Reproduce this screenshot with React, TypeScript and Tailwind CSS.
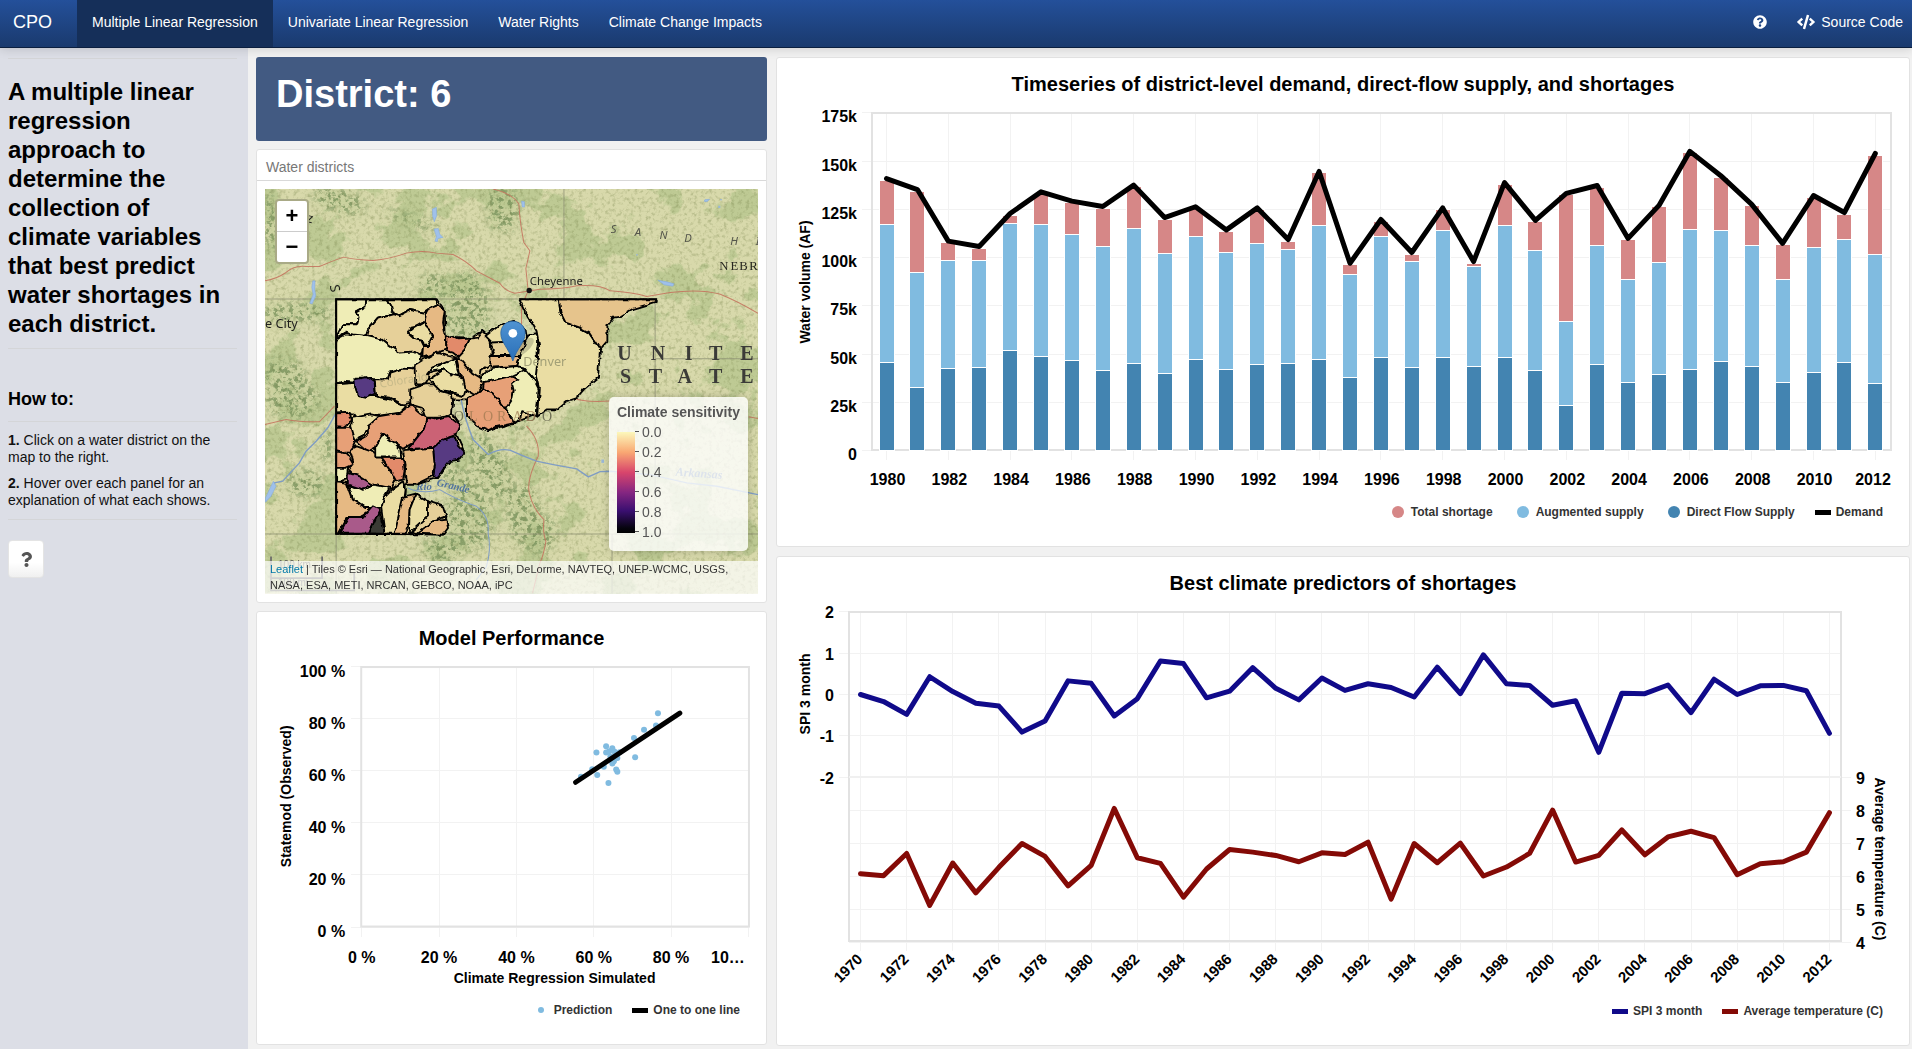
import React from "react";
import { FaCode, FaQuestion, FaQuestionCircle } from "react-icons/fa";

/* ---------- data ---------- */

// [year, direct flow, + augmented, + shortage] as stacked tops, thousand AF
const supply: [number, number, number, number][] = [
  [1980, 45.6, 117.2, 140.1],
  [1981, 32.7, 92.3, 134.4],
  [1982, 42.5, 98.5, 107.7],
  [1983, 43.0, 98.5, 104.9],
  [1984, 51.8, 117.7, 122.0],
  [1985, 48.7, 117.2, 133.2],
  [1986, 46.7, 112.0, 128.4],
  [1987, 41.5, 105.8, 125.6],
  [1988, 45.1, 115.1, 136.7],
  [1989, 39.9, 102.1, 119.9],
  [1990, 47.2, 110.9, 125.5],
  [1991, 42.0, 102.6, 113.5],
  [1992, 44.6, 107.3, 124.9],
  [1993, 45.1, 104.2, 108.5],
  [1994, 47.2, 116.6, 143.8],
  [1995, 37.8, 91.3, 96.2],
  [1996, 48.2, 110.9, 118.9],
  [1997, 43.1, 98.0, 101.8],
  [1998, 48.2, 114.0, 124.9],
  [1999, 43.6, 95.5, 97.1],
  [2000, 48.2, 116.7, 138.0],
  [2001, 41.5, 103.6, 118.4],
  [2002, 23.3, 66.9, 132.4],
  [2003, 44.5, 106.4, 136.5],
  [2004, 35.3, 88.7, 109.1],
  [2005, 39.5, 97.4, 126.2],
  [2006, 42.0, 114.5, 154.2],
  [2007, 46.2, 114.0, 141.6],
  [2008, 43.6, 106.4, 126.7],
  [2009, 35.3, 88.7, 106.5],
  [2010, 40.4, 105.3, 131.3],
  [2011, 45.6, 109.4, 122.5],
  [2012, 34.7, 101.6, 153.1],
];

const spi = [
  0, -0.17, -0.48, 0.43, 0.07, -0.21, -0.28, -0.91, -0.64, 0.33, 0.27, -0.52, -0.1, 0.81, 0.75, -0.08, 0.08, 0.65,
  0.15, -0.13, 0.4, 0.1, 0.26, 0.17, -0.06, 0.66, 0.02, 0.96, 0.26, 0.22, -0.26, -0.15, -1.4, 0.03, 0.02, 0.23,
  -0.44, 0.37, 0, 0.21, 0.22, 0.09, -0.94,
];

const temperature = [
  6.08, 6.02, 6.69, 5.12, 6.4, 5.5, 6.27, 6.99, 6.6, 5.71, 6.33, 8.05, 6.56, 6.39, 5.37, 6.22, 6.81, 6.73, 6.63,
  6.44, 6.71, 6.66, 7.03, 5.31, 6.99, 6.41, 7.0, 6.01, 6.28, 6.69, 8.0, 6.43, 6.63, 7.4, 6.65, 7.19, 7.36, 7.17,
  6.05, 6.38, 6.44, 6.73, 7.92,
];

// [simulated %, observed %]
const predictions: [number, number][] = [
  [56.7, 57.7], [59.6, 60.6], [60.7, 67.0], [60.9, 58.4], [63.2, 69.4], [63.2, 67.0], [64.8, 68.6], [65.4, 67.3],
  [64.3, 65.5], [66.1, 64.9], [64.8, 62.8], [62.6, 61.5], [65.8, 60.5], [66.1, 59.6], [63.8, 55.3], [70.7, 65.2],
  [70.4, 72.6], [73.0, 75.7], [76.1, 77.4], [76.6, 82.1], [66.7, 67.1], [65.2, 63.6], [64.0, 67.5],
];

const evenYears = (from: number, to: number) =>
  Array.from({ length: (to - from) / 2 + 1 }, (_, i) => from + i * 2);

/* ---------- shared pieces ---------- */

const tickText = "fill-black text-[16px] font-bold";
const axisText = "fill-black text-[14px] font-bold";

function Card({ children }: { children: React.ReactNode }) {
  return <section className="rounded-[3px] border border-[#e2e2e2] bg-white">{children}</section>;
}

type LegendItem = { label: string; color: string; shape: "dot" | "smallDot" | "line" };

function ChartCard({ title, legend, children }: { title: string; legend: LegendItem[]; children: React.ReactNode }) {
  return (
    <Card>
      <h2 className="pt-3.5 text-center text-[20px] leading-6 font-bold text-black">{title}</h2>
      {children}
      <ul className="mb-[22px] flex h-6 items-center justify-end gap-5 pr-[26px] text-[12px] font-bold text-[#333]">
        {legend.map((item) => (
          <li key={item.label} className="flex items-center">
            {item.shape === "line" ? (
              <span className="mr-[5px] h-[5px] w-4" style={{ background: item.color }} />
            ) : (
              <span className="mr-[7px] ml-1 flex size-3 items-center justify-center">
                <span
                  className={item.shape === "dot" ? "size-3 rounded-full" : "size-1.5 rounded-full"}
                  style={{ background: item.color }}
                />
              </span>
            )}
            {item.label}
          </li>
        ))}
      </ul>
    </Card>
  );
}

/* ---------- charts ---------- */

function TimeseriesChart() {
  const x = (year: number) => 109.5 + (year - 1980) * 30.9;
  const y = (k: number) => 354.5 - k * 1.93;
  return (
    <svg viewBox="0 0 1132 404" className="block w-full" role="img" aria-label="Demand, supply and shortages by year">
      <g stroke="#f2f2f2" strokeWidth="1" shapeRendering="crispEdges">
        {[0, 25, 50, 75, 100, 125, 150, 175].map((k) => (
          <line key={k} x1="85" x2="1114" y1={y(k)} y2={y(k)} />
        ))}
        {evenYears(1980, 2012).map((t) => (
          <line key={t} x1={x(t)} x2={x(t)} y1="17" y2="364" />
        ))}
      </g>
      <rect x="95" y="17" width="1019" height="337" fill="none" stroke="#e2e2e2" strokeWidth="2" />
      {supply.map(([year, direct, augmented, total]) => (
        <g key={year} stroke="#fff" strokeWidth="1" shapeRendering="crispEdges">
          <rect x={x(year) - 7.5} width="15" y={y(total)} height={y(augmented) - y(total)} fill="#d68787" />
          <rect x={x(year) - 7.5} width="15" y={y(augmented)} height={y(direct) - y(augmented)} fill="#80bbe0" />
          <rect x={x(year) - 7.5} width="15" y={y(direct)} height={y(0) - y(direct)} fill="#4384b1" />
        </g>
      ))}
      <polyline
        points={supply.map(([year, , , total]) => `${x(year)},${y(total + 0.8)}`).join(" ")}
        fill="none"
        stroke="#000"
        strokeWidth="5"
        strokeLinejoin="round"
        strokeLinecap="round"
      />
      {[0, 25, 50, 75, 100, 125, 150, 175].map((k) => (
        <text key={k} x="80" y={y(k) + 9.5} textAnchor="end" className={tickText}>
          {k === 0 ? "0" : `${k}k`}
        </text>
      ))}
      {evenYears(1980, 2012).map((t) => (
        <text key={t} x={t === 2012 ? 1096 : x(t) + 1} y="389" textAnchor="middle" className={tickText}>
          {t}
        </text>
      ))}
      <text transform="translate(33 186) rotate(-90)" textAnchor="middle" className={axisText}>
        Water volume (AF)
      </text>
    </svg>
  );
}

function PredictorsChart() {
  const x = (i: number) => 83.5 + i * 23.07;
  const ySpi = (v: number) => 99.5 - v * 41.3;
  const yTemp = (v: number) => 347.5 - (v - 4) * 33.1;
  return (
    <svg viewBox="0 0 1132 404" className="block w-full" role="img" aria-label="SPI and average temperature by year">
      <g stroke="#f2f2f2" strokeWidth="1" shapeRendering="crispEdges">
        {[2, 1, 0, -1, -2].map((v) => (
          <line key={v} x1="62" x2="1064" y1={ySpi(v)} y2={ySpi(v)} />
        ))}
        {[4, 5, 6, 7, 8, 9].map((v) => (
          <line key={v} x1="72" x2="1074" y1={yTemp(v)} y2={yTemp(v)} />
        ))}
        {evenYears(1970, 2012).map((t) => (
          <line key={t} x1={x(t - 1970)} x2={x(t - 1970)} y1="17" y2="356" />
        ))}
      </g>
      <rect x="72" y="17" width="992" height="329" fill="none" stroke="#e2e2e2" strokeWidth="2" />
      <line x1="72" x2="1064" y1="182" y2="182" stroke="#f0f0f0" strokeWidth="2" />
      <polyline
        points={spi.map((v, i) => `${x(i)},${ySpi(v)}`).join(" ")}
        fill="none"
        stroke="#100a8a"
        strokeWidth="5"
        strokeLinejoin="round"
        strokeLinecap="round"
      />
      <polyline
        points={temperature.map((v, i) => `${x(i)},${yTemp(v)}`).join(" ")}
        fill="none"
        stroke="#840a06"
        strokeWidth="5"
        strokeLinejoin="round"
        strokeLinecap="round"
      />
      {[2, 1, 0, -1, -2].map((v) => (
        <text key={v} x="57" y={ySpi(v) + 6.5} textAnchor="end" className={tickText}>
          {v}
        </text>
      ))}
      {[4, 5, 6, 7, 8, 9].map((v) => (
        <text key={v} x="1079" y={yTemp(v) + 6.5} className={tickText}>
          {v}
        </text>
      ))}
      {evenYears(1970, 2012).map((t) => (
        <text
          key={t}
          transform={`translate(${x(t - 1970) + 3} 365) rotate(-45)`}
          textAnchor="end"
          className="fill-black text-[15px] font-bold"
        >
          {t}
        </text>
      ))}
      <text transform="translate(33 99) rotate(-90)" textAnchor="middle" className={axisText}>
        SPI 3 month
      </text>
      <text transform="translate(1098 264) rotate(90)" textAnchor="middle" className={axisText}>
        Average temperature (C)
      </text>
    </svg>
  );
}

function PerformanceChart() {
  const x = (p: number) => 104.5 + p * 3.86;
  const y = (p: number) => 276.5 - p * 2.6;
  const ticks = [0, 20, 40, 60, 80, 100];
  return (
    <svg viewBox="0 0 508 348" className="block w-full" role="img" aria-label="Observed against simulated shortages">
      <g stroke="#f2f2f2" strokeWidth="1" shapeRendering="crispEdges">
        {ticks.map((p) => (
          <g key={p}>
            <line x1="94" x2="491" y1={y(p)} y2={y(p)} />
            <line x1={x(p)} x2={x(p)} y1="16" y2="286" />
          </g>
        ))}
      </g>
      <rect x="104" y="17" width="387" height="259" fill="none" stroke="#e2e2e2" strokeWidth="2" />
      {predictions.map(([sim, obs], i) => (
        <circle key={i} cx={x(sim)} cy={y(obs)} r="3" fill="#80bbe0" />
      ))}
      <line x1="318" y1="132" x2="422" y2="63" stroke="#000" strokeWidth="5" strokeLinecap="round" />
      {ticks.map((p) => (
        <text key={p} x="88" y={y(p) + 10} textAnchor="end" className={tickText}>
          {p} %
        </text>
      ))}
      {ticks.map((p) => (
        <text key={p} x={p === 100 ? 470 : x(p)} y="312" textAnchor="middle" className={tickText}>
          {p === 100 ? "10…" : `${p} %`}
        </text>
      ))}
      <text x="297" y="332" textAnchor="middle" className={axisText}>
        Climate Regression Simulated
      </text>
      <text transform="translate(34 146) rotate(-90)" textAnchor="middle" className={axisText}>
        Statemod (Observed)
      </text>
    </svg>
  );
}

/* ---------- map ---------- */

const PALE = "#efedb6";
const SAND = "#eadda3";
const TAN = "#e6d099";
const PEACH = "#e6b983";
const ORANGE = "#e7a077";
const CORAL = "#e28a6a";
const RED = "#cb6275";
const MAGENTA = "#a95a8a";
const PURPLE = "#573a82";

const districts: [string, string][] = [
  [PALE, "240,360 327,360 325,385 298,400 308,415 302,435 260,435 245,465 240,490"],
  [PALE, "327,360 395,360 408,385 412,402 365,415 335,450 330,470 290,468 270,460 245,475 245,465 260,435 302,435 308,415 298,400 325,385"],
  [SAND, "395,360 540,360 543,378 515,390 500,400 460,392 430,408 412,402 408,385"],
  [TAN, "412,402 430,408 460,392 500,400 510,398 505,428 490,440 465,445 458,465 470,475 490,480 500,500 498,520 490,530 470,517 430,520 400,500 375,480 330,470 335,450 365,415"],
  [PEACH, "510,398 515,390 545,378 565,395 560,430 568,470 570,510 530,525 498,535 500,500 515,500 530,470 520,450 500,430 505,428"],
  [SAND, "458,460 470,448 500,430 520,450 530,470 515,500 500,498 495,480 470,475"],
  [PALE, "245,475 270,462 290,465 330,470 375,480 400,500 430,520 470,517 495,530 490,560 475,570 440,568 400,580 395,600 355,600 330,595 300,595 295,610 260,607 240,615 240,490"],
  [TAN, "472,580 477,555 502,540 537,520 597,535 582,550 547,555 522,570 517,600 507,615 477,615"],
  [PALE, "512,585 527,565 552,555 597,535 607,590 582,585 562,570 532,575"],
  [SAND, "517,600 562,570 582,585 622,595 632,620 622,650 582,640 552,635 532,615"],
  [TAN, "640,478 665,475 680,455 702,475 705,520 702,555 672,575 668,597 647,580 610,540 605,530 625,510"],
  [CORAL, "570,475 585,470 605,480 640,478 625,510 605,532 590,520 570,515"],
  [PEACH, "597,535 617,545 647,580 672,595 682,610 657,648 627,630 622,600 607,580"],
  [SAND, "687,470 732,435 772,425 807,450 812,485 707,490"],
  [TAN, "702,490 812,485 792,530 702,530 712,510"],
  [PEACH, "702,530 792,530 782,560 702,565"],
  [PALE, "672,595 697,570 732,565 782,560 807,570 772,590 722,600 682,608"],
  [ORANGE, "682,608 722,600 762,590 787,600 767,615 772,635 762,680 747,690 707,640 680,630"],
  [ORANGE, "632,660 680,630 707,640 720,655 747,690 777,730 720,742 697,755 662,740 632,710"],
  [PALE, "807,570 832,600 847,625 840,710 797,695 790,718 777,730 747,690 767,660 772,635 767,615 787,600 762,590"],
  [PALE, "807,485 820,465 837,462 847,470 840,520 844,600 847,630 832,600 802,565 782,560 792,530"],
  [SAND, "788,360 907,360 912,400 927,430 970,445 997,460 1030,510 1024,595 1000,615 982,630 960,655 930,665 900,690 870,690 842,712 847,625 838,590 848,500 840,455 810,405"],
  ["#e6c48c", "907,360 1198,360 1198,368 1130,388 1110,400 1090,412 1070,415 1052,440 1052,485 1030,510 997,460 970,445 927,430 912,400"],
  [SAND, "240,615 295,610 305,650 355,650 400,660 450,680 430,700 370,708 300,715 290,702 240,705"],
  [TAN, "355,600 395,600 400,580 440,568 475,570 477,615 500,620 462,640 465,670 440,675 400,655 360,650"],
  [PURPLE, "295,600 330,593 355,610 358,642 330,655 305,650 297,625"],
  [TAN, "462,630 507,615 532,615 552,635 587,645 590,670 587,700 562,715 507,715 497,685 462,675"],
  [SAND, "288,715 345,705 370,710 335,750 300,785 290,770 285,740"],
  [CORAL, "240,702 280,700 288,725 265,742 240,740"],
  [ORANGE, "465,675 480,690 510,715 505,745 470,790 440,808 415,790 375,765 360,800 340,820 300,785 335,765 335,740 370,710 430,700"],
  [RED, "510,715 535,720 560,712 580,710 612,735 600,765 560,780 530,805 455,808 470,790 505,745"],
  [PURPLE, "530,805 560,780 595,770 605,800 625,820 610,840 580,845 560,870 545,895 530,890 535,860"],
  [ORANGE, "240,742 285,742 298,785 285,815 240,820"],
  [PEACH, "280,810 300,800 357,820 375,835 400,870 420,895 405,928 350,915 290,885 275,870 292,850"],
  [ORANGE, "240,815 270,822 280,835 292,855 270,865 240,865"],
  [CORAL, "375,835 440,835 445,870 440,900 420,905 400,870"],
  [PALE, "357,800 378,765 415,790 432,808 435,834 357,834"],
  [PEACH, "440,812 530,805 535,860 530,890 480,915 450,915 445,880 448,860"],
  [PALE, "240,865 275,865 272,900 240,905"],
  [PALE, "275,915 320,930 350,915 400,925 385,950 380,985 330,985 290,960"],
  [MAGENTA, "275,880 310,890 350,915 320,930 275,915"],
  [PEACH, "240,905 272,910 290,960 330,985 350,985 310,1015 270,1015 245,1062 240,1062"],
  [MAGENTA, "250,1062 275,1015 320,1015 350,980 370,990 340,1062"],
  ["#3a3b34", "370,990 375,1020 388,1062 338,1062"],
  [SAND, "405,930 440,905 448,930 440,990 420,1062 385,1062 375,985 385,950"],
  [PEACH, "440,955 478,945 460,990 458,1030 445,1062 415,1062"],
  [SAND, "478,945 515,965 515,1010 470,1060 458,1060 460,990"],
  [TAN, "515,965 560,980 570,1010 530,1025 480,1060 465,1055 515,1010"],
  [PEACH, "530,1025 570,1020 575,1045 560,1065 480,1062"],
];

const westOutline =
  "240,360 543,360 565,395 568,475 640,478 680,455 702,475 772,425 812,470 840,465 845,700 697,755 632,710 632,660 590,660 587,700 612,735 600,765 625,820 580,840 545,895 480,915 448,915 448,950 515,965 570,1010 560,1065 240,1062";

const mountains: [number, number, number, number, number][] = [
  [250, 65, 80, 36, 15],
  [45, 130, 26, 90, -5],
  [470, 125, 90, 14, 20],
  [630, 390, 70, 110, 0],
  [530, 320, 40, 40, 0],
  [740, 90, 50, 70, 0],
  [120, 400, 110, 28, 0],
  [90, 600, 70, 60, 40],
  [110, 660, 80, 60, 0],
  [150, 910, 60, 40, 0],
  [215, 800, 20, 50, 0],
  [640, 1010, 70, 100, -10],
  [700, 860, 50, 110, -25],
  [800, 1000, 50, 90, 0],
  [790, 700, 30, 60, 0],
  [840, 1060, 60, 60, 0],
  [600, 890, 50, 30, 20],
  [560, 1110, 60, 40, 0],
];

function TerrainMap() {
  return (
    <svg viewBox="27 30 1476 1212" preserveAspectRatio="xMidYMid slice" className="block size-full" aria-hidden="true">
      <defs>
        <filter id="veg" x="0" y="0" width="100%" height="100%" colorInterpolationFilters="sRGB">
          <feTurbulence type="fractalNoise" baseFrequency="0.008" numOctaves="6" seed="11" />
          <feColorMatrix values="0 0 0 0 0.72  0 0 0 0 0.78  0 0 0 0 0.56  16 0 0 0 -8.6" />
        </filter>
        <filter id="grain" x="0" y="0" width="100%" height="100%" colorInterpolationFilters="sRGB">
          <feTurbulence type="fractalNoise" baseFrequency="0.09" numOctaves="3" seed="4" />
          <feColorMatrix values="0 0 0 0 0.45  0 0 0 0 0.50  0 0 0 0 0.28  2.4 0 0 0 -1.15" />
        </filter>
        <filter id="ridge" x="-10%" y="-10%" width="120%" height="120%" colorInterpolationFilters="sRGB">
          <feGaussianBlur in="SourceGraphic" stdDeviation="14" result="soft" />
          <feTurbulence type="fractalNoise" baseFrequency="0.07" numOctaves="4" seed="8" />
          <feColorMatrix values="0 0 0 0 0.47  0 0 0 0 0.57  0 0 0 0 0.36  7 0 0 0 -3.5" result="spots" />
          <feComposite in="spots" in2="soft" operator="in" />
        </filter>
        <filter id="soft" x="-20%" y="-20%" width="140%" height="140%" colorInterpolationFilters="sRGB">
          <feGaussianBlur stdDeviation="16" />
        </filter>
        <filter id="rough" x="-2%" y="-2%" width="104%" height="104%" colorInterpolationFilters="sRGB">
          <feTurbulence type="fractalNoise" baseFrequency="0.045" numOctaves="2" seed="3" result="n" />
          <feDisplacementMap in="SourceGraphic" in2="n" scale="14" xChannelSelector="R" yChannelSelector="G" />
        </filter>
        <clipPath id="frame">
          <path d="M237 357H1203V720H860V1090H237Z" />
        </clipPath>
        <linearGradient id="pin" x1="0" y1="0" x2="0" y2="1">
          <stop offset="0" stopColor="#4f93d2" />
          <stop offset="1" stopColor="#2a6fb8" />
        </linearGradient>
      </defs>

      <rect x="27" y="30" width="1476" height="1212" fill="#d8d9ab" />
      <rect x="27" y="30" width="1476" height="1212" filter="url(#veg)" opacity="0.8" />
      <g fill="#b9c88f" opacity="0.45" filter="url(#soft)">
        {mountains.map(([cx, cy, rx, ry, a], i) => (
          <ellipse key={i} cx={cx} cy={cy} rx={rx} ry={ry} transform={`rotate(${a} ${cx} ${cy})`} />
        ))}
      </g>
      <g filter="url(#ridge)" opacity="0.8">
        {mountains.map(([cx, cy, rx, ry, a], i) => (
          <ellipse key={i} cx={cx} cy={cy} rx={rx} ry={ry} transform={`rotate(${a} ${cx} ${cy})`} />
        ))}
      </g>
      <rect x="27" y="30" width="1476" height="1212" filter="url(#grain)" opacity="0.4" />

      {/* graticule */}
      <g stroke="#8f9174" strokeWidth="3" fill="none" opacity="0.8">
        <path d="M27 359H790M922 30V359M27 1063H1503M240 1063V1242M1195 368V1063M1195 538H1503M1066 1063V1242" />
      </g>

      {/* roads */}
      <g fill="none" stroke="#c4705c" strokeWidth="3" opacity="0.85">
        <path d="M27 305Q60 300 90 280Q115 258 150 262L190 262Q230 245 262 234Q300 242 350 244Q400 240 450 222Q500 212 540 222L590 226Q630 245 660 275L730 312Q745 335 775 342L850 330Q920 330 960 320Q1030 315 1060 335Q1130 340 1170 352L1240 340Q1330 328 1390 345Q1440 365 1503 402" />
        <path d="M710 30Q770 45 787 75Q790 130 802 190L820 215L808 268L815 335L795 380L795 450" />
        <path d="M27 735L90 720Q130 728 190 727L235 680" />
        <path d="M810 740Q850 780 845 830Q810 900 818 940Q830 990 862 1020Q858 1060 868 1085Q860 1130 850 1150Q835 1210 828 1240" />
        <path d="M950 655Q980 670 1060 665M1475 712L1503 717" />
      </g>
      {/* rivers and lakes */}
      <g fill="none" stroke="#7f9cc4" strokeWidth="4">
        <path d="M240 700L215 745L180 785L150 815L130 850L80 905L55 910L30 965" />
        <path d="M612 650Q625 720 650 780Q670 800 695 825Q730 805 760 812Q800 830 840 845L890 855L960 868L995 892L1030 876L1060 875L1180 885L1290 910L1380 920L1503 945" />
        <path d="M455 925Q500 945 550 930Q600 960 660 980Q700 1010 695 1060Q705 1110 690 1160L660 1200" strokeWidth="3" />
      </g>
      <g fill="#9fc0ea" stroke="#7fa6da" strokeWidth="1.5">
        <path d="M528 90L540 85L541 110L534 128L529 112Z" />
        <path d="M533 150L546 148L550 165L560 175L545 178L543 188L536 186L540 172Z" />
        <path d="M170 305L177 305L176 330L179 350L168 374L161 372L171 345L167 325Z" />
        <path d="M795 66L804 68L804 84L797 84Z" />
        <path d="M1203 303L1230 308L1252 314L1248 321L1222 317Z" />
        <path d="M52 905L60 920L45 950L28 968L28 955Z" />
        <path d="M1344 62L1358 61L1350 68L1342 67Z" />
      </g>
      <g fill="#9bb8d8">
        <rect x="1384" y="80" width="6" height="7" />
        <rect x="1390" y="60" width="5" height="4" />
        <rect x="1034" y="840" width="8" height="10" />
        <rect x="1138" y="225" width="5" height="4" />
      </g>

      {/* place names beneath the districts */}
      <g fontFamily="'Noto Sans', sans-serif" fill="#1f1f1c">
        <text x="27" y="445" fontSize="38">e City</text>
        <circle cx="818" cy="334" r="8" fill="#111" />
        <text x="820" y="318" fontSize="34">Cheyenne</text>
        <text x="152" y="130" fontSize="40" transform="rotate(12 155 120)">z</text>
        <text x="222" y="342" fontSize="40" transform="rotate(80 235 330)">S</text>
        <text x="1062 1134 1208 1282 1420 1496" y="162 172 180 188 198 199" fontSize="34" fontStyle="italic" fill="#55564c">
          SANDHI
        </text>
      </g>
      <g fontFamily="'Liberation Serif', serif" fill="#26261f">
        <text x="1387 1421 1447 1477" y="273" fontSize="38">NEBR</text>
        <text x="1082 1182 1284 1356 1450" y="542" fontSize="60" fontWeight="bold" fill="#3b3b38">
          UNITE
        </text>
        <text x="1090 1176 1262 1356 1450" y="612" fontSize="60" fontWeight="bold" fill="#3b3b38">
          STATE
        </text>
        <text x="556 592 638 680 722 768 808 856" y="724" fontSize="42" fill="#6f6f55">
          COLORADO
        </text>
      </g>
      <g fontFamily="'Liberation Serif', serif" fontStyle="italic" fill="#53749f">
        <text x="480" y="930" fontSize="32" fontWeight="bold">Rio</text>
        <text x="540" y="918" fontSize="32" fontWeight="bold" transform="rotate(13 540 918)">Grande</text>
        <text x="1256" y="888" fontSize="36" fontWeight="bold" transform="rotate(4 1256 888)">Arkansas</text>
      </g>

      {/* districts */}
      <g clipPath="url(#frame)">
        <g filter="url(#rough)" stroke="#000" strokeWidth="5.5" strokeLinejoin="round">
          <polygon points={westOutline} fill={TAN} />
          {districts.map(([fill, points], i) => (
            <polygon key={i} points={points} fill={fill} />
          ))}
        </g>
      </g>
      <path d="M543 360H240V1062H400M788 360H1198V370" fill="none" stroke="#000" strokeWidth="6" />
      <g fontFamily="'Noto Sans', sans-serif" fill="#a3a077">
        <text x="800" y="560" fontSize="38">Denver</text>
        <text x="372" y="625" fontSize="34" opacity="0.45" transform="rotate(-9 372 625)">Colorado</text>
      </g>
      <g fontFamily="'Liberation Serif', serif" fill="#a07a52" opacity="0.75">
        <text x="638 680 722 768 808" y="724" fontSize="42">LORAD</text>
      </g>

      {/* marker */}
      <ellipse cx="800" cy="505" rx="40" ry="16" fill="#000" opacity="0.18" transform="rotate(-42 800 505)" />
      <path
        d="M769 426C748 426 733 441 733 462C733 490 756 505 769 545C782 505 806 490 806 462C806 441 790 426 769 426Z"
        fill="url(#pin)"
        stroke="#2a66a5"
        strokeWidth="2.5"
      />
      <circle cx="769" cy="462" r="13" fill="#fff" />

      {/* scale bar */}
      <g fill="none" stroke="#666" strokeWidth="5">
        <path d="M45 1130V1195H198V1130M45 1180V1232H294V1180" />
      </g>
      <g fontFamily="'Liberation Sans', sans-serif" fontSize="30" fill="#555">
        <text x="66" y="1166">100 km</text>
        <text x="66" y="1218">100 mi</text>
      </g>
    </svg>
  );
}

function MapPanel() {
  return (
    <Card>
      <h2 className="border-b border-[#d9d9d9] px-[9px] pt-1.5 pb-0.5 text-[14px] leading-[22px] text-[#777]">
        Water districts
      </h2>
      <div className="p-2">
        <div className="relative aspect-[492/404] overflow-hidden">
          <TerrainMap />
          <div className="absolute top-2.5 left-2.5 flex flex-col overflow-hidden rounded-[4px] border-2 border-[#a9aa86] bg-white text-[22px] font-bold text-black">
            <button type="button" aria-label="Zoom in" className="h-[31px] w-[30px] border-b border-[#ccc] leading-[28px]">
              +
            </button>
            <button type="button" aria-label="Zoom out" className="h-[30px] w-[30px] leading-[28px]">
              −
            </button>
          </div>
          <div className="absolute right-2.5 bottom-[43px] h-[154px] w-[139px] rounded-[5px] bg-white/80 px-2 pt-[5px] text-[14px] leading-5 text-[#555] shadow-[0_0_10px_rgba(0,0,0,0.2)]">
            <strong className="block">Climate sensitivity</strong>
            <div className="flex">
              <div className="mt-2.5 h-[101px] w-[18px] bg-[linear-gradient(#fcf8bb,#f9a873_20%,#d8456c_40%,#842681_60%,#3a0f70_78%,#06040f_95%,#000)]" />
              <ul>
                {["0.0", "0.2", "0.4", "0.6", "0.8", "1.0"].map((v) => (
                  <li key={v} className="flex items-center gap-[3px]">
                    <span className="h-px w-1 bg-[#555]" />
                    {v}
                  </li>
                ))}
              </ul>
            </div>
          </div>
          <p className="absolute inset-x-0 bottom-0 bg-white/70 px-[5px] pb-px text-[11px] leading-4 text-[#333]">
            <a href="#leaflet" className="text-[#0078a8]">
              Leaflet
            </a>{" "}
            | Tiles © Esri — National Geographic, Esri, DeLorme, NAVTEQ, UNEP-WCMC, USGS, NASA, ESA, METI, NRCAN, GEBCO,
            NOAA, iPC
          </p>
        </div>
      </div>
    </Card>
  );
}

/* ---------- page ---------- */

function NavBar() {
  const links = ["Multiple Linear Regression", "Univariate Linear Regression", "Water Rights", "Climate Change Impacts"];
  return (
    <header className="relative z-10 flex h-12 border-b border-[#0b1f3f] bg-linear-to-b from-[#24509a] to-[#1a3a6e] text-[14px] leading-5 text-white shadow-[0_1px_10px_rgba(0,0,0,0.15)]">
      <a href="#home" className="w-[77px] pt-3 pl-[13px] text-[18px]">
        CPO
      </a>
      <nav className="flex flex-1">
        {links.map((label, i) => (
          <a key={label} href={`#page-${i}`} className={i === 0 ? "bg-[#152f59] px-[15px] pt-3" : "px-[15px] pt-3"}>
            {label}
          </a>
        ))}
      </nav>
      <a href="#about" aria-label="About" className="px-[15px] pt-[15px]">
        <FaQuestionCircle size={14} />
      </a>
      <a href="#source" className="flex items-start gap-1.5 pt-3 pr-[9px] pl-[15px]">
        <FaCode size={18} className="mt-px" />
        Source Code
      </a>
    </header>
  );
}

function Sidebar() {
  return (
    <aside className="w-[248px] shrink-0 bg-[#dcdee6] pt-2.5 pr-[11px] pl-2 text-[14px] leading-[17px] text-[#111]">
      <hr className="border-[#d4d5d8]" />
      <h1 className="mt-[18px] text-[24px] leading-[29px] font-bold text-black">
        A multiple linear regression approach to determine the collection of climate variables that best predict water
        shortages in each district.
      </h1>
      <hr className="mt-2.5 border-[#d4d5d8]" />
      <h2 className="mt-10 text-[18px] leading-5 font-bold text-black">How to:</h2>
      <hr className="mt-3 border-[#d4d5d8]" />
      <p className="mt-2.5">
        <b>1.</b> Click on a water district on the map to the right.
      </p>
      <p className="mt-[9px]">
        <b>2.</b> Hover over each panel for an explanation of what each shows.
      </p>
      <hr className="mt-2.5 border-[#d4d5d8]" />
      <button
        type="button"
        aria-label="Help"
        className="mt-5 flex h-[38px] w-9 items-center justify-center rounded-[4px] border border-[#e4e4e4] bg-linear-to-b from-white from-60% to-[#f0f0f0] text-[#555]"
      >
        <FaQuestion size={15} />
      </button>
    </aside>
  );
}

export default function App() {
  return (
    <div className="flex min-h-screen flex-col bg-[#f1f1f1] font-['Liberation_Sans',Arial,sans-serif]">
      <NavBar />
      <div className="flex flex-1">
        <Sidebar />
        <main className="grid flex-1 grid-cols-[511fr_1134fr] items-start gap-[9px] pt-[9px] pr-0.5 pb-[3px] pl-2">
          <div className="flex min-w-0 flex-col gap-2">
            <section className="h-[84px] rounded-[3px] bg-[#425a82] px-5 pt-4">
              <p className="text-[38px] leading-[42px] font-bold text-white">District: 6</p>
            </section>
            <MapPanel />
            <ChartCard
              title="Model Performance"
              legend={[
                { label: "Prediction", color: "#80bbe0", shape: "smallDot" },
                { label: "One to one line", color: "#000", shape: "line" },
              ]}
            >
              <PerformanceChart />
            </ChartCard>
          </div>
          <div className="flex min-w-0 flex-col gap-[9px]">
            <ChartCard
              title="Timeseries of district-level demand, direct-flow supply, and shortages"
              legend={[
                { label: "Total shortage", color: "#d68787", shape: "dot" },
                { label: "Augmented supply", color: "#80bbe0", shape: "dot" },
                { label: "Direct Flow Supply", color: "#4384b1", shape: "dot" },
                { label: "Demand", color: "#000", shape: "line" },
              ]}
            >
              <TimeseriesChart />
            </ChartCard>
            <ChartCard
              title="Best climate predictors of shortages"
              legend={[
                { label: "SPI 3 month", color: "#100a8a", shape: "line" },
                { label: "Average temperature (C)", color: "#840a06", shape: "line" },
              ]}
            >
              <PredictorsChart />
            </ChartCard>
          </div>
        </main>
      </div>
    </div>
  );
}
